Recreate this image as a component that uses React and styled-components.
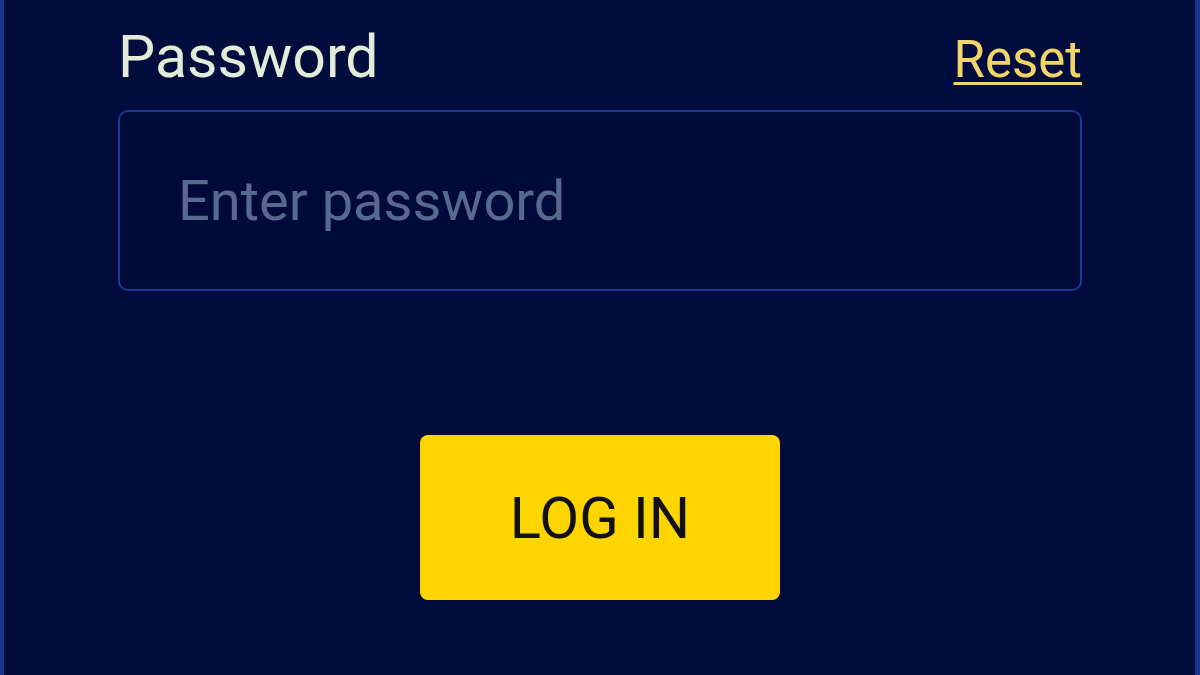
import React, { useState } from "react";
import styled, { createGlobalStyle } from "styled-components";

const GlobalStyle = createGlobalStyle`
  html, body {
    margin: 0;
    padding: 0;
    background: #000c3c;
  }
  * { box-sizing: border-box; }
`;

export default function App() {
    const [password, setPassword] = useState("");

    return <>
        <GlobalStyle />
        <Panel>
            <Form onSubmit={e => e.preventDefault()}>
                <LabelRow>
                    <Label htmlFor="password">Password</Label>
                    <ResetLink href="#">Reset</ResetLink>
                </LabelRow>
                <PasswordInput
                    id="password"
                    type="password"
                    placeholder="Enter password"
                    value={password}
                    onChange={e => setPassword(e.target.value)}
                />
                <LoginButton type="submit">LOG IN</LoginButton>
            </Form>
        </Panel>
    </>
}

const Panel = styled.div`
    width: 1200px;
    height: 675px;
    overflow: hidden;
    background: #000c3c;
    border-left: 4px solid #17348c;
    border-right: 5px solid #17348c;
    padding: 22px 113px 0 114px;
    font-family: Roboto, "Liberation Sans", sans-serif;
`;

const Form = styled.form`
    display: flex;
    flex-direction: column;
`;

const LabelRow = styled.div`
    display: flex;
    justify-content: space-between;
    align-items: baseline;
    margin-bottom: 18px;
`;

const Label = styled.label`
    font-size: 59px;
    color: #e2ecd8;
    line-height: 70px;
`;

const ResetLink = styled.a`
    font-size: 51px;
    color: #f2d46a;
    text-decoration: underline;
    text-decoration-thickness: 3px;
    text-underline-offset: 5px;
`;

const PasswordInput = styled.input`
    height: 181px;
    width: 100%;
    background: #000a38;
    border: 2px solid #1b3896;
    border-radius: 10px;
    padding: 0 58px;
    font-family: inherit;
    font-size: 56px;
    color: #e2ecd8;
    outline: none;

    &::placeholder {
        color: #566a8f;
    }
`;

const LoginButton = styled.button`
    align-self: center;
    margin-top: 144px;
    width: 360px;
    height: 165px;
    background: #ffd500;
    border: none;
    border-radius: 8px;
    font-family: inherit;
    font-size: 58px;
    color: #111;
    cursor: pointer;
`;
